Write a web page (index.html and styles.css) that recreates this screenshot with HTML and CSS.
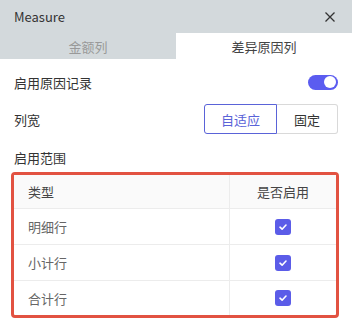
FILE: index.html
```html
<!DOCTYPE html>
<html>
<head>
<meta charset="utf-8">
<link rel="stylesheet" href="styles.css">
</head>
<body>
<div class="dialog">
  <div class="header">
    <span class="title">Measure</span>
    <svg class="close" width="12" height="12" viewBox="0 0 12 12"><path d="M1.5 1.5 L10.5 10.5 M10.5 1.5 L1.5 10.5" stroke="#333" stroke-width="1.3" fill="none"/></svg>
  </div>
  <div class="tabs">
    <div class="tab">金额列</div>
    <div class="tab active">差异原因列</div>
  </div>
  <div class="content">
    <div class="row r1">
      <span class="label">启用原因记录</span>
      <span class="toggle"><span class="knob"></span></span>
    </div>
    <div class="row r2">
      <span class="label">列宽</span>
      <div class="seg">
        <span class="seg-btn on">自适应</span>
        <span class="seg-btn">固定</span>
      </div>
    </div>
    <div class="row r3">
      <span class="label">启用范围</span>
    </div>
    <div class="table">
      <div class="tr th"><span class="c1">类型</span><span class="c2">是否启用</span></div>
      <div class="tr"><span class="c1">明细行</span><span class="c2"><span class="cb"><svg width="10" height="10" viewBox="0 0 10 10"><path d="M2 5.2 L4.1 7.2 L8 3" stroke="#fff" stroke-width="1.6" fill="none" stroke-linecap="round" stroke-linejoin="round"/></svg></span></span></div>
      <div class="tr"><span class="c1">小计行</span><span class="c2"><span class="cb"><svg width="10" height="10" viewBox="0 0 10 10"><path d="M2 5.2 L4.1 7.2 L8 3" stroke="#fff" stroke-width="1.6" fill="none" stroke-linecap="round" stroke-linejoin="round"/></svg></span></span></div>
      <div class="tr last"><span class="c1">合计行</span><span class="c2"><span class="cb"><svg width="10" height="10" viewBox="0 0 10 10"><path d="M2 5.2 L4.1 7.2 L8 3" stroke="#fff" stroke-width="1.6" fill="none" stroke-linecap="round" stroke-linejoin="round"/></svg></span></span></div>
    </div>
  </div>
</div>
</body>
</html>
```
FILE: styles.css
```css
html, body {
  margin: 0;
  padding: 0;
  background: #fff;
}
body {
  font-family: "Noto Sans CJK SC", "Noto Sans", sans-serif;
  font-size: 13px;
  color: #333;
}
.dialog {
  width: 352px;
  height: 332px;
  background: #fff;
}
.header {
  height: 33px;
  background: #d3d9dc;
  display: flex;
  align-items: center;
  justify-content: space-between;
  padding: 0 16px 0 14px;
}
.title {
  font-size: 13px;
  color: #333;
}
.close {
  display: block;
}
.tabs {
  display: flex;
  height: 26px;
}
.tab {
  flex: 1;
  display: flex;
  align-items: center;
  justify-content: center;
  background: #d3d9dc;
  color: #999;
}
.tab.active {
  background: #fff;
  color: #444;
}
.content {
  padding: 0 14px 0 11px;
}
.row {
  display: flex;
  align-items: center;
  justify-content: space-between;
  padding-left: 3px;
}
.r1 {
  margin-top: 8px;
  height: 30px;
}
.r2 {
  margin-top: 7px;
  height: 30px;
}
.r3 {
  margin-top: 13px;
  height: 20px;
}
.toggle {
  width: 30px;
  height: 15px;
  border-radius: 8px;
  background: #5b5cf0;
  display: flex;
  align-items: center;
  justify-content: flex-end;
  padding: 0 2px;
  box-sizing: border-box;
}
.knob {
  width: 12px;
  height: 12px;
  border-radius: 50%;
  background: #fff;
}
.seg {
  display: flex;
  height: 30px;
}
.seg-btn {
  display: flex;
  align-items: center;
  justify-content: center;
  border: 1px solid #d9d9d9;
  box-sizing: border-box;
  color: #333;
}
.seg-btn.on {
  width: 73px;
  border-color: #5a63d8;
  color: #5a63d8;
  border-radius: 3px 0 0 3px;
}
.seg-btn:not(.on) {
  width: 61px;
  border-left: none;
  border-radius: 0 3px 3px 0;
}
.table {
  margin-top: 5px;
  border: 3px solid #e25241;
  border-radius: 4px;
  width: 328px;
  box-sizing: border-box;
}
.tr {
  display: flex;
  height: 35px;
  border-bottom: 1px solid #ececec;
  color: #666;
}
.tr.last {
  border-bottom: none;
  height: 34px;
}
.th {
  background: #fafafa;
  color: #444;
  height: 33px;
}
.c1 {
  flex: 1;
  display: flex;
  align-items: center;
  padding-left: 14px;
}
.c2 {
  width: 106px;
  display: flex;
  align-items: center;
  justify-content: center;
  border-left: 1px solid #ececec;
}
.cb {
  width: 16px;
  height: 16px;
  border-radius: 3px;
  background: #5b5ce8;
  display: flex;
  align-items: center;
  justify-content: center;
}
```
